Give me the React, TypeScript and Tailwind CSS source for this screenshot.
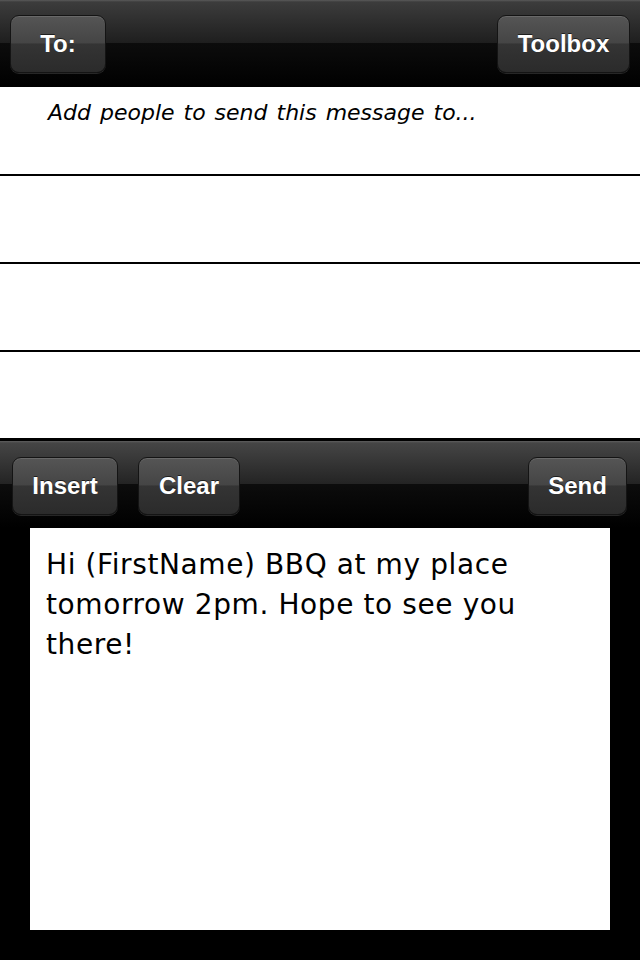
import React from "react";

function Btn({ label, w }: { label: string; w: string }) {
  return (
    <div
      className={`${w} h-[58px] flex items-center justify-center rounded-[9px] border border-[#141414] bg-[linear-gradient(to_bottom,#555555_0%,#454545_48%,#343434_50%,#2b2b2b_100%)] shadow-[inset_0_1px_0_rgba(255,255,255,0.12),0_1px_0_rgba(255,255,255,0.14)] text-white text-[24px] font-bold [font-family:'Liberation_Sans',Arial,sans-serif] [text-shadow:0_-1px_0_rgba(0,0,0,0.6)]`}
    >
      {label}
    </div>
  );
}

export default function App() {
  return (
    <div className="w-[640px] h-[960px] flex flex-col bg-black overflow-hidden">
      <div className="h-[87px] shrink-0 flex items-start justify-between pt-[15px] px-[10px] bg-[linear-gradient(to_bottom,#5a5a5a_0px,#3c3c3c_2px,#1e1e1e_50%,#0c0c0c_50%,#000000_100%)]">
        <Btn label="To:" w="w-[96px]" />
        <Btn label="Toolbox" w="w-[133px]" />
      </div>
      <div className="bg-white flex flex-col">
        <div className="h-[89px] border-b-2 border-black pl-[48px] pt-[9px]">
          <span className="text-[22px] italic text-black [font-family:'DejaVu_Sans',Verdana,sans-serif] [word-spacing:2px]">
            Add people to send this message to...
          </span>
        </div>
        <div className="h-[88px] border-b-2 border-black" />
        <div className="h-[88px] border-b-2 border-black" />
        <div className="h-[86px]" />
      </div>
      <div className="flex-1 flex flex-col border-t-[3px] border-black">
        <div className="h-[87px] shrink-0 flex items-start pt-[16px] pl-[12px] pr-[13px] gap-[20px] bg-[linear-gradient(to_bottom,#5e5e5e_0px,#454545_2px,#232323_50%,#0c0c0c_50%,#000000_100%)]">
          <Btn label="Insert" w="w-[106px]" />
          <Btn label="Clear" w="w-[102px]" />
          <div className="flex-1" />
          <Btn label="Send" w="w-[99px]" />
        </div>
        <div className="mx-[30px] h-[402px] bg-white pl-[16px] pr-[20px] pt-[17px]">
          <p className="text-[28px] leading-[40px] tracking-[0.6px] text-black [font-family:'DejaVu_Sans',Verdana,sans-serif]">
            Hi (FirstName) BBQ at my place tomorrow 2pm. Hope to see you there!
          </p>
        </div>
      </div>
    </div>
  );
}
